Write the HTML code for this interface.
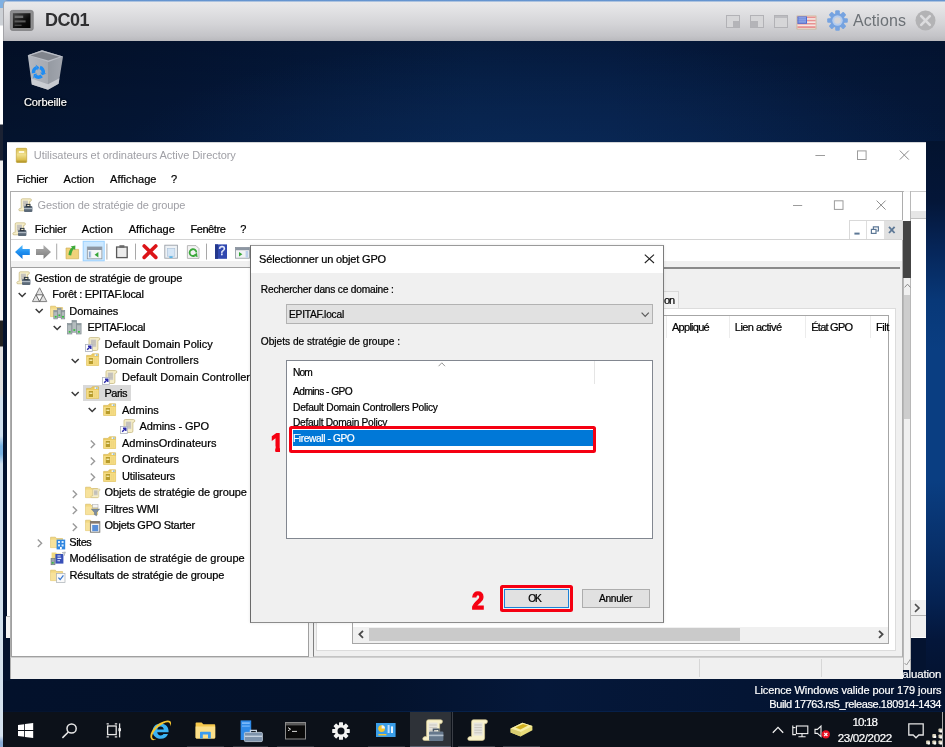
<!DOCTYPE html>
<html lang="fr"><head><meta charset="utf-8"><title>DC01</title>
<style>
html,body{margin:0;padding:0;background:#041630;}
body{width:945px;height:747px;overflow:hidden;position:relative;font-family:'Liberation Sans',sans-serif;}
#s{position:absolute;left:-4px;top:-4px;width:953px;height:755px;overflow:hidden;filter:blur(0.4px);}
#w{position:absolute;left:4px;top:4px;width:945px;height:747px;}
#s div,#s span,#s svg{position:absolute;box-sizing:border-box;}
#s span{white-space:pre;}
#s svg{overflow:visible;}
</style></head><body><div id="s"><div id="w">
<div style="left:-4px;top:-4px;width:953px;height:755px;background:#04152f;"></div>
<div style="left:0px;top:0px;width:945px;height:747px;background:#04152f;background:radial-gradient(ellipse 420px 120px at 540px 160px,rgba(12,46,94,0.55) 0%,rgba(12,46,94,0) 100%),linear-gradient(180deg,rgba(0,0,10,0.22) 41px,rgba(0,0,10,0) 141px),linear-gradient(90deg,#04132d 0%,#041738 20%,#06214a 50%,#06204a 65%,#051b40 85%,#04183a 100%);"></div>
<div style="left:925px;top:141px;width:24px;height:570px;background:#08326c;background:linear-gradient(180deg,#03132f 0px,#041638 60px,#06265a 110px,#083878 160px,#0a3e82 210px,#0a3e82 340px,#08316c 400px,#052252 460px,#04163a 500px,#041330 540px,#041330 570px);"></div>
<div style="left:3px;top:678px;width:923px;height:33px;background:#04142f;background:linear-gradient(90deg,#03112b 0%,#03122c 40%,#05183a 58%,#041534 80%,#041330 100%);"></div>
<div style="left:902px;top:637px;width:24px;height:42px;background:#041330;"></div>
<div style="left:3px;top:141px;width:8px;height:540px;background:#04132e;"></div>
<div style="left:-4px;top:0px;width:7px;height:751px;background:#e4e8ec;background:linear-gradient(180deg,#7aa8dc 0px,#85b2e2 6px,#cdd1d6 7px,#cdd1d6 25px,#fff 26px,#fff 124px,#1b2233 125px,#1b2233 160px,#f0f0f0 161px,#f6f6f6 320px,#222 321px,#222 346px,#e2e2e2 347px,#e0e0e0 394px,#d2e2f0 398px,#d2e2f0 436px,#78b2e2 446px,#78b2e2 454px,#d2e2f0 464px,#d6e3ee 736px,#88aad4 742px,#88aad4 747px);"></div>
<div style="left:-4px;top:-4px;width:953px;height:5px;background:#6a98d2;"></div>
<div style="left:0px;top:0px;width:12px;height:8px;background:#7fb0e2;"></div>
<div style="left:3px;top:0px;width:942px;height:41.2px;background:#d4d4d7;background:linear-gradient(180deg,#5e8fcc 0px,#6f9cd4 1.2px,#e9e9eb 1.8px,#e4e4e6 8px,#d4d4d7 24px,#c4c4c8 36px,#b8b8bc 41.2px);border-top-left-radius:5px;border-left:0.6px solid #a4a4a8;"></div>
<svg style="left:10.3px;top:10px" width="24" height="21" viewBox="0 0 24 21"><defs><linearGradient id="cg" x1="0" y1="0" x2="1" y2="1"><stop offset="0" stop-color="#4a4a4a"/><stop offset="0.6" stop-color="#0c0c0c"/><stop offset="1" stop-color="#000"/></linearGradient></defs><rect x="0.4" y="0.4" width="22.8" height="20" rx="2" fill="#8e8e90" stroke="#7a7a7c" stroke-width="0.8"/><rect x="2.9" y="3.2" width="17.6" height="14.8" fill="url(#cg)"/><rect x="4.6" y="5.6" width="8.6" height="2.4" fill="#6c6c6c"/><rect x="4.6" y="10.4" width="11" height="2" fill="#5a5a5a"/><rect x="4.6" y="14.6" width="7" height="1.4" fill="#444"/></svg>
<span style="left:45.00px;top:10.11px;font-size:18px;line-height:20.106px;color:#2f2f31;font-weight:700;letter-spacing:-0.508px;">DC01</span>
<div style="left:725.5px;top:14.5px;width:14.5px;height:13px;background:#d6d6d8;border:1px solid #b2b2b6;"></div>
<div style="left:749.5px;top:14.5px;width:14.5px;height:13px;background:#d6d6d8;border:1px solid #b2b2b6;"></div>
<div style="left:773.5px;top:14.5px;width:14.5px;height:13px;background:#d6d6d8;border:1px solid #b2b2b6;"></div>
<div style="left:732.5px;top:21px;width:6.5px;height:5.5px;background:#b4b4b8;"></div>
<div style="left:750.5px;top:20.5px;width:7px;height:6px;background:#b4b4b8;"></div>
<div style="left:774.5px;top:15.5px;width:12.5px;height:2.5px;background:#bcbcc0;"></div>
<svg style="left:797px;top:15.5px" width="19" height="13" viewBox="0 0 19 13"><rect width="19" height="13" fill="#f4e6e2" stroke="#c9ac86" stroke-width="0.7"/><g fill="#e89292"><rect x="0.4" y="0.6" width="18.2" height="1.5"/><rect x="0.4" y="3.8" width="18.2" height="1.5"/><rect x="0.4" y="7" width="18.2" height="1.5"/><rect x="0.4" y="10.2" width="18.2" height="1.8"/></g><rect x="0.4" y="0.4" width="9.6" height="7.4" fill="#4a6cd2"/><g fill="#c4d0f4"><rect x="1.4" y="1.5" width="7.6" height="0.9"/><rect x="1.4" y="3.5" width="7.6" height="0.9"/><rect x="1.4" y="5.5" width="7.6" height="0.9"/></g></svg>
<svg style="left:826.5px;top:10px" width="21" height="21" viewBox="-10.5 -10.5 21 21"><g fill="#76a3e0"><rect x="-2.3" y="-10.3" width="4.6" height="5" rx="1" transform="rotate(0)"/><rect x="-2.3" y="-10.3" width="4.6" height="5" rx="1" transform="rotate(45)"/><rect x="-2.3" y="-10.3" width="4.6" height="5" rx="1" transform="rotate(90)"/><rect x="-2.3" y="-10.3" width="4.6" height="5" rx="1" transform="rotate(135)"/><rect x="-2.3" y="-10.3" width="4.6" height="5" rx="1" transform="rotate(180)"/><rect x="-2.3" y="-10.3" width="4.6" height="5" rx="1" transform="rotate(225)"/><rect x="-2.3" y="-10.3" width="4.6" height="5" rx="1" transform="rotate(270)"/><rect x="-2.3" y="-10.3" width="4.6" height="5" rx="1" transform="rotate(315)"/></g><circle r="7.3" fill="#76a3e0"/><circle r="5.2" fill="#b4ccee"/><circle r="3.3" fill="#d5d5d8"/></svg>
<span style="left:853.00px;top:11.92px;font-size:16px;line-height:17.872px;color:#6c7176;letter-spacing:0.076px;">Actions</span>
<svg style="left:915px;top:9.5px" width="21" height="21" viewBox="0 0 21 21"><circle cx="10.5" cy="10.5" r="10" fill="#b3b3b5"/><path d="M6.2 6.2 L14.8 14.8 M14.8 6.2 L6.2 14.8" stroke="#dcdcde" stroke-width="2.6" stroke-linecap="round"/></svg>
<svg style="left:27px;top:49px" width="37" height="42" viewBox="0 0 37 42">
<defs><linearGradient id="rb1" x1="0" y1="0" x2="1" y2="0"><stop offset="0" stop-color="#b4b8c0"/><stop offset="0.56" stop-color="#a6aab2"/><stop offset="0.57" stop-color="#959aa2"/><stop offset="1" stop-color="#a2a6ae"/></linearGradient></defs>
<path d="M0.8 6.3 L15 1.3 L36 7.6 L31.6 34.8 L21 40.8 L4.8 35.6 Z" fill="url(#rb1)"/>
<path d="M0.8 6.3 L15 1.3 L36 7.6 L21.5 13 Z" fill="#b9bdc5"/>
<path d="M3.4 6.6 L15 2.8 L32.8 7.8 L21.4 11.6 Z" fill="#80848c"/>
<path d="M4.2 29.6 L21 35.2 L32.4 29.2 L31.6 34.8 L21 40.8 L4.8 35.6 Z" fill="#d2d5da" opacity="0.8"/>
<path d="M12.91 18.54 A4.9 4.9 0 0 1 16.23 24.05" fill="none" stroke="#1f8cf2" stroke-width="3.6"/><path d="M19.38 24.61 L15.23 26.26 L13.07 23.50 Z" fill="#1f8cf2"/><path d="M14.68 26.84 A4.9 4.9 0 0 1 8.25 26.95" fill="none" stroke="#1f8cf2" stroke-width="3.6"/><path d="M6.19 29.40 L6.84 24.98 L10.31 24.50 Z" fill="#1f8cf2"/><path d="M6.61 24.22 A4.9 4.9 0 0 1 9.72 18.60" fill="none" stroke="#1f8cf2" stroke-width="3.6"/><path d="M8.63 15.59 L12.14 18.36 L10.82 21.60 Z" fill="#1f8cf2"/>
</svg>
<span style="left:23.90px;top:95.84px;font-size:11px;line-height:12.287px;color:#fff;letter-spacing:-0.069px;-webkit-text-stroke:0.2px #fff;text-shadow:0 1px 2px #000,0 0 2px #000;">Corbeille</span>
<span style="left:902.34px;top:667.59px;font-size:11.5px;line-height:12.845px;color:#fff;letter-spacing:-0.162px;-webkit-text-stroke:0.2px #fff;">aluation</span>
<span style="left:754.40px;top:683.75px;font-size:11px;line-height:12.287px;color:#fff;letter-spacing:-0.102px;-webkit-text-stroke:0.2px #fff;">Licence Windows valide pour 179 jours</span>
<span style="left:769.28px;top:698.04px;font-size:11px;line-height:12.287px;color:#fff;letter-spacing:-0.421px;-webkit-text-stroke:0.2px #fff;">Build 17763.rs5_release.180914-1434</span>
<div style="left:6.9px;top:141.6px;width:918.8px;height:496.4px;background:#fff;border-top:1px solid #d4d6d8;"></div>
<svg style="left:16px;top:148px" width="11" height="15" viewBox="0 0 11 15"><defs><linearGradient id="ad" x1="0" y1="0" x2="0" y2="1"><stop offset="0" stop-color="#d9bd4c"/><stop offset="0.45" stop-color="#f0df8c"/><stop offset="0.8" stop-color="#dcc050"/><stop offset="1" stop-color="#a88a1c"/></linearGradient></defs><rect x="0.3" y="0.3" width="10.4" height="14.2" rx="0.8" fill="url(#ad)" stroke="#b89a28" stroke-width="0.6"/><rect x="2.8" y="3" width="5.4" height="2" fill="#fdf8dc"/></svg>
<span style="left:33.80px;top:149.44px;font-size:11px;line-height:12.287px;color:#a0a0a6;letter-spacing:-0.050px;">Utilisateurs et ordinateurs Active Directory</span>
<svg style="left:810px;top:146px" width="105" height="18" viewBox="0 0 105 18"><g stroke="#9c9c9c" stroke-width="1" fill="none"><path d="M5.4 9.5 H15"/><rect x="47.5" y="4.9" width="8.6" height="8.6"/><path d="M89.8 4.6 L98.8 13.6 M98.8 4.6 L89.8 13.6" stroke="#8c8c8c"/></g></svg>
<span style="left:16.50px;top:173.34px;font-size:11px;line-height:12.287px;color:#000;letter-spacing:-0.259px;-webkit-text-stroke:0.22px #000;">Fichier</span>
<span style="left:63.50px;top:173.34px;font-size:11px;line-height:12.287px;color:#000;letter-spacing:0.070px;-webkit-text-stroke:0.22px #000;">Action</span>
<span style="left:110.00px;top:173.34px;font-size:11px;line-height:12.287px;color:#000;letter-spacing:0.103px;-webkit-text-stroke:0.22px #000;">Affichage</span>
<span style="left:171.00px;top:173.34px;font-size:11px;line-height:12.287px;color:#000;-webkit-text-stroke:0.22px #000;">?</span>
<div style="left:911px;top:191px;width:14.7px;height:1px;background:#c8c8c8;"></div>
<div style="left:911px;top:211px;width:14.7px;height:6.5px;background:#e6e6e6;"></div>
<div style="left:911px;top:217.5px;width:14.7px;height:1px;background:#c0c0c0;"></div>
<div style="left:911px;top:600.4px;width:14.7px;height:14.6px;background:#f0f0f0;"></div>
<svg style="left:913px;top:602.5px" width="9" height="10" viewBox="0 0 9 10"><path d="M2 1.2 L6 5 L2 8.8" fill="none" stroke="#505050" stroke-width="1.6"/></svg>
<div style="left:911px;top:615px;width:14.7px;height:1.2px;background:#b4b4b4;"></div>
<div style="left:911px;top:616.2px;width:14.7px;height:21.3px;background:#f0f0f0;"></div>
<div style="left:6.4px;top:615.7px;width:4px;height:1px;background:#bcbcbc;"></div>
<div style="left:6.4px;top:616.7px;width:4px;height:21px;background:#f4f4f4;"></div>
<div style="left:10px;top:190.5px;width:893px;height:488.2px;background:#fff;border:1px solid #adadad;border-bottom:none;"></div>
<div style="left:902.6px;top:191px;width:8.6px;height:479px;background:#f0f0f0;border-left:1px solid #b8b8b8;border-right:1px solid #b8b8b8;"></div>
<div style="left:903.4px;top:191.5px;width:7px;height:29px;background:#fff;"></div>
<div style="left:902.6px;top:220.5px;width:8.4px;height:57px;background:#444;"></div>
<svg style="left:903.5px;top:282px" width="7" height="8" viewBox="0 0 7 8"><path d="M0.6 5.4 L3.5 2.2 L6.4 5.4" fill="none" stroke="#8a8a8a" stroke-width="1"/></svg>
<div style="left:903.6px;top:295px;width:6.8px;height:124px;background:#cdcdcd;"></div>
<svg style="left:903.5px;top:658px" width="7" height="8" viewBox="0 0 7 8"><path d="M0.5 5 L2.5 7 L6.5 1" fill="none" stroke="#9a9a9a" stroke-width="1"/></svg>
<svg style="left:17.6px;top:198.2px" width="15" height="15" viewBox="0 0 15 15"><path d="M3.2 2 Q3.2 0.8 4.4 0.8 H12.2 Q13.6 0.8 13.4 2.2 Q13.2 3.4 12 3.4 H11.6 V11.4 Q11.6 12.8 10.2 12.8 H2 Q0.6 12.8 0.8 11.6 Q1 10.4 2.4 10.4 H3.2 Z" fill="#f6eec8" stroke="#c4b67e" stroke-width="0.7"/><rect x="4.8" y="2.6" width="5.2" height="7" fill="#cfccc6"/><path d="M5.2 4 H9.6 M5.2 5.8 H9.6 M5.2 7.6 H9.6" stroke="#b4b1aa" stroke-width="0.7"/><rect x="6" y="8" width="8.4" height="6" rx="1" fill="#5c6a78"/><rect x="8.4" y="6.4" width="3.6" height="2.2" fill="none" stroke="#2d3640" stroke-width="1"/><rect x="6" y="10" width="8.4" height="1.2" fill="#aeb8c2"/></svg>
<span style="left:37.60px;top:199.34px;font-size:11px;line-height:12.287px;color:#a0a0a6;letter-spacing:-0.112px;">Gestion de stratégie de groupe</span>
<svg style="left:788px;top:196px" width="105" height="18" viewBox="0 0 105 18"><g stroke="#9c9c9c" stroke-width="1" fill="none"><path d="M5 9.5 H14.2"/><rect x="46.4" y="4.8" width="8.6" height="8.6"/><path d="M88.6 4.6 L97.6 13.6 M97.6 4.6 L88.6 13.6" stroke="#8c8c8c"/></g></svg>
<svg style="left:12.4px;top:222.4px" width="15" height="15" viewBox="0 0 15 15"><path d="M3.2 2 Q3.2 0.8 4.4 0.8 H12.2 Q13.6 0.8 13.4 2.2 Q13.2 3.4 12 3.4 H11.6 V11.4 Q11.6 12.8 10.2 12.8 H2 Q0.6 12.8 0.8 11.6 Q1 10.4 2.4 10.4 H3.2 Z" fill="#f6eec8" stroke="#c4b67e" stroke-width="0.7"/><rect x="4.8" y="2.6" width="5.2" height="7" fill="#cfccc6"/><path d="M5.2 4 H9.6 M5.2 5.8 H9.6 M5.2 7.6 H9.6" stroke="#b4b1aa" stroke-width="0.7"/><rect x="6" y="8" width="8.4" height="6" rx="1" fill="#5c6a78"/><rect x="8.4" y="6.4" width="3.6" height="2.2" fill="none" stroke="#2d3640" stroke-width="1"/><rect x="6" y="10" width="8.4" height="1.2" fill="#aeb8c2"/></svg>
<span style="left:34.80px;top:223.34px;font-size:11px;line-height:12.287px;color:#000;letter-spacing:-0.188px;-webkit-text-stroke:0.22px #000;">Fichier</span>
<span style="left:81.70px;top:223.34px;font-size:11px;line-height:12.287px;color:#000;letter-spacing:0.120px;-webkit-text-stroke:0.22px #000;">Action</span>
<span style="left:128.70px;top:223.34px;font-size:11px;line-height:12.287px;color:#000;letter-spacing:0.070px;-webkit-text-stroke:0.22px #000;">Affichage</span>
<span style="left:190.40px;top:223.34px;font-size:11px;line-height:12.287px;color:#000;letter-spacing:-0.417px;-webkit-text-stroke:0.22px #000;">Fenêtre</span>
<span style="left:240.20px;top:223.34px;font-size:11px;line-height:12.287px;color:#000;-webkit-text-stroke:0.22px #000;">?</span>
<div style="left:849px;top:220px;width:53.6px;height:19.6px;background:#fff;border:1px solid #d9d9d9;"></div>
<div style="left:866.3px;top:220.5px;width:1px;height:18.6px;background:#dedede;"></div>
<div style="left:884px;top:220.5px;width:18px;height:18.6px;background:#e1e1e1;"></div>
<svg style="left:849px;top:220px" width="54" height="20" viewBox="0 0 54 20"><g fill="none" stroke="#5d7896" stroke-width="1.2"><path d="M5.4 13.6 H10.6" stroke-width="2"/><rect x="22.4" y="9.4" width="4.6" height="4"/><path d="M24.4 9 V6.8 H29.4 V11 H27.4"/><path d="M40 6.8 L45.6 13 M45.6 6.8 L40 13" stroke-width="1.8"/></g></svg>
<div style="left:11px;top:239.3px;width:891px;height:1px;background:#d4d4d4;"></div>
<div style="left:11px;top:260.8px;width:891px;height:6.4px;background:#f0f0f0;"></div>
<svg style="left:0;top:0" width="260" height="270" viewBox="0 0 260 270">
<defs><linearGradient id="ba" x1="0" y1="0" x2="0" y2="1"><stop offset="0" stop-color="#5cc0ff"/><stop offset="0.5" stop-color="#1e8ff0"/><stop offset="1" stop-color="#1070d8"/></linearGradient>
<linearGradient id="ga" x1="0" y1="0" x2="0" y2="1"><stop offset="0" stop-color="#b0b0b0"/><stop offset="1" stop-color="#7c7c7c"/></linearGradient></defs>
<path d="M15 252 L22.5 245 V249 H29.8 V255 H22.5 V259 Z" fill="url(#ba)"/>
<path d="M51 252 L43.5 245 V249 H36 V255 H43.5 V259 Z" fill="url(#ga)"/>
<rect x="56.2" y="243.6" width="1" height="16" fill="#a8a8a8"/>
<path d="M66 248 H70.5 L71.5 249.4 H78.6 V258.8 H66 Z" fill="#f0d27a" stroke="#c9a94e" stroke-width="0.6"/>
<path d="M68.5 255 C69 250.5 70.6 248.6 72 247.6 L70.6 246.4 L75.4 245.4 L75.2 250 L73.8 248.9 C72.6 250 71.6 252 71.2 255.4 Z" fill="#3faa3a"/>
<rect x="83.2" y="241.3" width="21" height="19.5" fill="#cce8ff" stroke="#99d1ff" stroke-width="1"/>
<rect x="87.3" y="247" width="14.6" height="11.8" fill="#f4f6f8" stroke="#8c949c" stroke-width="0.8"/>
<rect x="87.3" y="247" width="14.6" height="3" fill="#8c96a2"/>
<rect x="88.4" y="250.8" width="3" height="7.4" fill="#d7e4f2"/><rect x="89.3" y="251.6" width="1.1" height="5.6" fill="#6f93c4"/>
<path d="M98.4 252 V257.4 L94.6 254.7 Z" fill="#35a638"/>
<rect x="106.4" y="243.6" width="1" height="16" fill="#a8a8a8"/>
<rect x="116.6" y="247" width="10.6" height="10.6" fill="#ececec" stroke="#595959" stroke-width="1.3"/>
<rect x="119.4" y="245.2" width="5" height="2.6" fill="#6a6a6a"/>
<rect x="135" y="243.6" width="1" height="16" fill="#a8a8a8"/>
<path d="M144.2 246 L155.8 257.4 M155.8 246 L144.2 257.4" stroke="#dc1418" stroke-width="3.6" stroke-linecap="round"/>
<rect x="164.8" y="245.2" width="12.6" height="13" fill="#eef2f6" stroke="#9aa0a8" stroke-width="0.9"/>
<rect x="167.4" y="248.4" width="7.4" height="7.8" fill="#d5e6f6" stroke="#a9bfd6" stroke-width="0.6"/><rect x="169.4" y="256.2" width="3.2" height="1.8" fill="#58b4e8"/>
<path d="M187.4 245.6 H196 L199 248.6 V258.4 H187.4 Z" fill="#f2f2f2" stroke="#a8a8a8" stroke-width="0.8"/>
<path d="M196.4 252.6 A3.4 3.4 0 1 0 194.6 255.6" fill="none" stroke="#3aa83a" stroke-width="1.8"/><path d="M193 255.2 L197.6 257.2 L197 252.8 Z" fill="#3aa83a"/>
<rect x="206" y="243.6" width="1" height="16" fill="#a8a8a8"/>
<rect x="215" y="244.4" width="12" height="14.4" fill="#3048b0"/><rect x="215" y="244.4" width="3" height="14.4" fill="#24388c"/>
<rect x="235.4" y="247.4" width="14" height="10.8" fill="#f0f2f4" stroke="#8c949c" stroke-width="0.8"/><rect x="235.4" y="247.4" width="14" height="2.8" fill="#8c96a2"/><path d="M239 252 V256.6 L242.4 254.3 Z" fill="#35a638"/><rect x="245.6" y="251" width="2.6" height="6.6" fill="#bcd0ea"/>
</svg>
<span style="left:218.40px;top:245.09px;font-size:12.5px;line-height:13.963px;color:#eef2ff;-webkit-text-stroke:0.3px #eef2ff;">?</span>
<div style="left:10.5px;top:267px;width:298.7px;height:390px;background:#fff;border:1px solid #a0a0a0;"></div>
<div style="left:309.2px;top:267px;width:4px;height:390px;background:#f0f0f0;"></div>
<div style="left:83px;top:385.4px;width:48px;height:16px;background:#d9d9d9;"></div>
<svg style="left:15.5px;top:270.9px" width="15" height="15" viewBox="0 0 15 15"><path d="M3.2 2 Q3.2 0.8 4.4 0.8 H12.2 Q13.6 0.8 13.4 2.2 Q13.2 3.4 12 3.4 H11.6 V11.4 Q11.6 12.8 10.2 12.8 H2 Q0.6 12.8 0.8 11.6 Q1 10.4 2.4 10.4 H3.2 Z" fill="#f6eec8" stroke="#c4b67e" stroke-width="0.7"/><rect x="4.8" y="2.6" width="5.2" height="7" fill="#cfccc6"/><path d="M5.2 4 H9.6 M5.2 5.8 H9.6 M5.2 7.6 H9.6" stroke="#b4b1aa" stroke-width="0.7"/><rect x="6" y="8" width="8.4" height="6" rx="1" fill="#5c6a78"/><rect x="8.4" y="6.4" width="3.6" height="2.2" fill="none" stroke="#2d3640" stroke-width="1"/><rect x="6" y="10" width="8.4" height="1.2" fill="#aeb8c2"/></svg>
<span style="left:34.40px;top:271.55px;font-size:11px;line-height:12.287px;color:#000;letter-spacing:-0.102px;-webkit-text-stroke:0.22px #000;">Gestion de stratégie de groupe</span>
<svg style="left:18px;top:291.8px" width="9" height="6" viewBox="0 0 9 6"><path d="M0.7 0.9 L4.2 4.5 L7.7 0.9" fill="none" stroke="#3a3a3a" stroke-width="1.5"/></svg>
<svg style="left:32.4px;top:286.59999999999997px" width="16" height="16" viewBox="0 0 16 16"><path d="M7.6 0.8 L14.8 14.6 H0.4 Z" fill="#e2e2e2" stroke="#808080" stroke-width="1"/><path d="M4 7.8 H11.2 L7.6 14.6 Z" fill="#fcfcfc" stroke="#5a5a5a" stroke-width="0.9"/></svg>
<span style="left:52.30px;top:288.05px;font-size:11px;line-height:12.287px;color:#000;letter-spacing:-0.285px;-webkit-text-stroke:0.22px #000;">Forêt : EPITAF.local</span>
<svg style="left:34.9px;top:308.3px" width="9" height="6" viewBox="0 0 9 6"><path d="M0.7 0.9 L4.2 4.5 L7.7 0.9" fill="none" stroke="#3a3a3a" stroke-width="1.5"/></svg>
<svg style="left:50px;top:303.9px" width="16" height="15" viewBox="0 0 16 15"><path d="M0.6 2.2 H5.4 L6.6 3.6 H12.6 V12.6 H0.6 Z" fill="#f3d983" stroke="#d2b55a" stroke-width="0.6"/><path d="M0.6 4.6 H12.6 V12.6 H0.6 Z" fill="#f7e29c"/><rect x="3.8" y="6.6" width="3.6" height="8.32" fill="#b4bcbe" stroke="#78848a" stroke-width="0.6"/><rect x="3.8" y="6.6" width="3.6" height="1.6" fill="#8e9a9e"/><rect x="4.7" y="11.92" width="1.9" height="1.7" fill="#34c03c"/><rect x="11.16" y="6.6" width="3.6" height="8.32" fill="#b4bcbe" stroke="#78848a" stroke-width="0.6"/><rect x="11.16" y="6.6" width="3.6" height="1.6" fill="#8e9a9e"/><rect x="12.06" y="11.92" width="1.9" height="1.7" fill="#34c03c"/><rect x="7.48" y="4.2" width="3.6" height="9.28" fill="#b4bcbe" stroke="#78848a" stroke-width="0.6"/><rect x="7.48" y="4.2" width="3.6" height="1.6" fill="#8e9a9e"/><rect x="8.38" y="10.48" width="1.9" height="1.7" fill="#34c03c"/></svg>
<span style="left:69.30px;top:304.55px;font-size:11px;line-height:12.287px;color:#000;letter-spacing:-0.066px;-webkit-text-stroke:0.22px #000;">Domaines</span>
<svg style="left:53px;top:324.8px" width="9" height="6" viewBox="0 0 9 6"><path d="M0.7 0.9 L4.2 4.5 L7.7 0.9" fill="none" stroke="#3a3a3a" stroke-width="1.5"/></svg>
<svg style="left:67.4px;top:320.4px" width="15" height="15" viewBox="0 0 15 15"><rect x="0.4" y="3.6" width="4.5" height="10.4" fill="#b4bcbe" stroke="#78848a" stroke-width="0.6"/><rect x="0.4" y="3.6" width="4.5" height="1.6" fill="#8e9a9e"/><rect x="1.75" y="11.0" width="1.9" height="1.7" fill="#34c03c"/><rect x="9.6" y="3.6" width="4.5" height="10.4" fill="#b4bcbe" stroke="#78848a" stroke-width="0.6"/><rect x="9.6" y="3.6" width="4.5" height="1.6" fill="#8e9a9e"/><rect x="10.95" y="11.0" width="1.9" height="1.7" fill="#34c03c"/><rect x="5.0" y="0.6" width="4.5" height="11.6" fill="#b4bcbe" stroke="#78848a" stroke-width="0.6"/><rect x="5.0" y="0.6" width="4.5" height="1.6" fill="#8e9a9e"/><rect x="6.35" y="9.2" width="1.9" height="1.7" fill="#34c03c"/></svg>
<span style="left:87.50px;top:321.05px;font-size:11px;line-height:12.287px;color:#000;letter-spacing:-0.388px;-webkit-text-stroke:0.22px #000;">EPITAF.local</span>
<svg style="left:84.6px;top:336.9px" width="15" height="15" viewBox="0 0 15 15"><g transform="translate(0.6,-0.3) scale(1.06,1.08)"><path d="M3.2 2 Q3.2 0.8 4.4 0.8 H12.2 Q13.6 0.8 13.4 2.2 Q13.2 3.4 12 3.4 H11.6 V11.4 Q11.6 12.8 10.2 12.8 H2 Q0.6 12.8 0.8 11.6 Q1 10.4 2.4 10.4 H3.2 Z" fill="#f6eec8" stroke="#c4b67e" stroke-width="0.7"/><rect x="4.8" y="2.6" width="5.2" height="7" fill="#cfccc6"/><path d="M5.2 4 H9.6 M5.2 5.8 H9.6 M5.2 7.6 H9.6" stroke="#b4b1aa" stroke-width="0.7"/></g><rect x="0.5" y="7.4" width="6.8" height="7" fill="#fcfcff" stroke="#aab0bc" stroke-width="0.8"/><path d="M2.2 12.8 L5.4 9.6 M3 9.2 H5.8 V12" stroke="#2a2aa8" stroke-width="1.4" fill="none"/></svg>
<span style="left:104.50px;top:337.55px;font-size:11px;line-height:12.287px;color:#000;-webkit-text-stroke:0.22px #000;">Default Domain Policy</span>
<svg style="left:70.6px;top:357.8px" width="9" height="6" viewBox="0 0 9 6"><path d="M0.7 0.9 L4.2 4.5 L7.7 0.9" fill="none" stroke="#3a3a3a" stroke-width="1.5"/></svg>
<svg style="left:85.8px;top:353.4px" width="14" height="13" viewBox="0 0 14 13"><path d="M0.6 2.4 H5 L6.4 0.8 H12.6 V12.4 H0.6 Z" fill="#eccb62" stroke="#d0ac44" stroke-width="0.6"/><path d="M0.6 4 H12.6 V12.4 H0.6 Z" fill="#f5dc84"/><rect x="8.6" y="1.2" width="3" height="1.8" fill="#eef4fa"/><rect x="10.2" y="1.4" width="1.2" height="1.4" fill="#6aa8c8"/><rect x="2.8" y="5" width="4.2" height="6" fill="#b89c2c"/><rect x="3.4" y="6.6" width="3" height="1.4" fill="#f4e8a8"/><path d="M8.6 5 V11.6 M10.4 5 V11.6" stroke="#ecd27a" stroke-width="0.6"/></svg>
<span style="left:104.50px;top:354.05px;font-size:11px;line-height:12.287px;color:#000;-webkit-text-stroke:0.22px #000;">Domain Controllers</span>
<svg style="left:102.2px;top:369.9px" width="15" height="15" viewBox="0 0 15 15"><g transform="translate(0.6,-0.3) scale(1.06,1.08)"><path d="M3.2 2 Q3.2 0.8 4.4 0.8 H12.2 Q13.6 0.8 13.4 2.2 Q13.2 3.4 12 3.4 H11.6 V11.4 Q11.6 12.8 10.2 12.8 H2 Q0.6 12.8 0.8 11.6 Q1 10.4 2.4 10.4 H3.2 Z" fill="#f6eec8" stroke="#c4b67e" stroke-width="0.7"/><rect x="4.8" y="2.6" width="5.2" height="7" fill="#cfccc6"/><path d="M5.2 4 H9.6 M5.2 5.8 H9.6 M5.2 7.6 H9.6" stroke="#b4b1aa" stroke-width="0.7"/></g><rect x="0.5" y="7.4" width="6.8" height="7" fill="#fcfcff" stroke="#aab0bc" stroke-width="0.8"/><path d="M2.2 12.8 L5.4 9.6 M3 9.2 H5.8 V12" stroke="#2a2aa8" stroke-width="1.4" fill="none"/></svg>
<span style="left:121.90px;top:370.55px;font-size:11px;line-height:12.287px;color:#000;letter-spacing:0.065px;-webkit-text-stroke:0.22px #000;">Default Domain Controller</span>
<svg style="left:70.6px;top:390.8px" width="9" height="6" viewBox="0 0 9 6"><path d="M0.7 0.9 L4.2 4.5 L7.7 0.9" fill="none" stroke="#3a3a3a" stroke-width="1.5"/></svg>
<svg style="left:85.8px;top:386.4px" width="14" height="13" viewBox="0 0 14 13"><path d="M0.6 2.4 H5 L6.4 0.8 H12.6 V12.4 H0.6 Z" fill="#eccb62" stroke="#d0ac44" stroke-width="0.6"/><path d="M0.6 4 H12.6 V12.4 H0.6 Z" fill="#f5dc84"/><rect x="8.6" y="1.2" width="3" height="1.8" fill="#eef4fa"/><rect x="10.2" y="1.4" width="1.2" height="1.4" fill="#6aa8c8"/><rect x="2.8" y="5" width="4.2" height="6" fill="#b89c2c"/><rect x="3.4" y="6.6" width="3" height="1.4" fill="#f4e8a8"/><path d="M8.6 5 V11.6 M10.4 5 V11.6" stroke="#ecd27a" stroke-width="0.6"/></svg>
<span style="left:104.50px;top:387.05px;font-size:11px;line-height:12.287px;color:#000;letter-spacing:-0.512px;-webkit-text-stroke:0.22px #000;">Paris</span>
<svg style="left:88px;top:407.3px" width="9" height="6" viewBox="0 0 9 6"><path d="M0.7 0.9 L4.2 4.5 L7.7 0.9" fill="none" stroke="#3a3a3a" stroke-width="1.5"/></svg>
<svg style="left:103.2px;top:402.9px" width="14" height="13" viewBox="0 0 14 13"><path d="M0.6 2.4 H5 L6.4 0.8 H12.6 V12.4 H0.6 Z" fill="#eccb62" stroke="#d0ac44" stroke-width="0.6"/><path d="M0.6 4 H12.6 V12.4 H0.6 Z" fill="#f5dc84"/><rect x="8.6" y="1.2" width="3" height="1.8" fill="#eef4fa"/><rect x="10.2" y="1.4" width="1.2" height="1.4" fill="#6aa8c8"/><rect x="2.8" y="5" width="4.2" height="6" fill="#b89c2c"/><rect x="3.4" y="6.6" width="3" height="1.4" fill="#f4e8a8"/><path d="M8.6 5 V11.6 M10.4 5 V11.6" stroke="#ecd27a" stroke-width="0.6"/></svg>
<span style="left:121.90px;top:403.55px;font-size:11px;line-height:12.287px;color:#000;letter-spacing:0.052px;-webkit-text-stroke:0.22px #000;">Admins</span>
<svg style="left:119.7px;top:419.4px" width="15" height="15" viewBox="0 0 15 15"><g transform="translate(0.6,-0.3) scale(1.06,1.08)"><path d="M3.2 2 Q3.2 0.8 4.4 0.8 H12.2 Q13.6 0.8 13.4 2.2 Q13.2 3.4 12 3.4 H11.6 V11.4 Q11.6 12.8 10.2 12.8 H2 Q0.6 12.8 0.8 11.6 Q1 10.4 2.4 10.4 H3.2 Z" fill="#f6eec8" stroke="#c4b67e" stroke-width="0.7"/><rect x="4.8" y="2.6" width="5.2" height="7" fill="#cfccc6"/><path d="M5.2 4 H9.6 M5.2 5.8 H9.6 M5.2 7.6 H9.6" stroke="#b4b1aa" stroke-width="0.7"/></g><rect x="0.5" y="7.4" width="6.8" height="7" fill="#fcfcff" stroke="#aab0bc" stroke-width="0.8"/><path d="M2.2 12.8 L5.4 9.6 M3 9.2 H5.8 V12" stroke="#2a2aa8" stroke-width="1.4" fill="none"/></svg>
<span style="left:139.50px;top:420.05px;font-size:11px;line-height:12.287px;color:#000;letter-spacing:-0.117px;-webkit-text-stroke:0.22px #000;">Admins - GPO</span>
<svg style="left:90.2px;top:440.3px" width="6" height="9" viewBox="0 0 6 9"><path d="M0.8 0.6 L4.6 4.3 L0.8 8" fill="none" stroke="#9a9a9a" stroke-width="1.4"/></svg>
<svg style="left:103.2px;top:435.9px" width="14" height="13" viewBox="0 0 14 13"><path d="M0.6 2.4 H5 L6.4 0.8 H12.6 V12.4 H0.6 Z" fill="#eccb62" stroke="#d0ac44" stroke-width="0.6"/><path d="M0.6 4 H12.6 V12.4 H0.6 Z" fill="#f5dc84"/><rect x="8.6" y="1.2" width="3" height="1.8" fill="#eef4fa"/><rect x="10.2" y="1.4" width="1.2" height="1.4" fill="#6aa8c8"/><rect x="2.8" y="5" width="4.2" height="6" fill="#b89c2c"/><rect x="3.4" y="6.6" width="3" height="1.4" fill="#f4e8a8"/><path d="M8.6 5 V11.6 M10.4 5 V11.6" stroke="#ecd27a" stroke-width="0.6"/></svg>
<span style="left:121.90px;top:436.55px;font-size:11px;line-height:12.287px;color:#000;letter-spacing:0.026px;-webkit-text-stroke:0.22px #000;">AdminsOrdinateurs</span>
<svg style="left:90.2px;top:456.8px" width="6" height="9" viewBox="0 0 6 9"><path d="M0.8 0.6 L4.6 4.3 L0.8 8" fill="none" stroke="#9a9a9a" stroke-width="1.4"/></svg>
<svg style="left:103.2px;top:452.4px" width="14" height="13" viewBox="0 0 14 13"><path d="M0.6 2.4 H5 L6.4 0.8 H12.6 V12.4 H0.6 Z" fill="#eccb62" stroke="#d0ac44" stroke-width="0.6"/><path d="M0.6 4 H12.6 V12.4 H0.6 Z" fill="#f5dc84"/><rect x="8.6" y="1.2" width="3" height="1.8" fill="#eef4fa"/><rect x="10.2" y="1.4" width="1.2" height="1.4" fill="#6aa8c8"/><rect x="2.8" y="5" width="4.2" height="6" fill="#b89c2c"/><rect x="3.4" y="6.6" width="3" height="1.4" fill="#f4e8a8"/><path d="M8.6 5 V11.6 M10.4 5 V11.6" stroke="#ecd27a" stroke-width="0.6"/></svg>
<span style="left:121.90px;top:453.05px;font-size:11px;line-height:12.287px;color:#000;letter-spacing:-0.044px;-webkit-text-stroke:0.22px #000;">Ordinateurs</span>
<svg style="left:90.2px;top:473.3px" width="6" height="9" viewBox="0 0 6 9"><path d="M0.8 0.6 L4.6 4.3 L0.8 8" fill="none" stroke="#9a9a9a" stroke-width="1.4"/></svg>
<svg style="left:103.2px;top:468.9px" width="14" height="13" viewBox="0 0 14 13"><path d="M0.6 2.4 H5 L6.4 0.8 H12.6 V12.4 H0.6 Z" fill="#eccb62" stroke="#d0ac44" stroke-width="0.6"/><path d="M0.6 4 H12.6 V12.4 H0.6 Z" fill="#f5dc84"/><rect x="8.6" y="1.2" width="3" height="1.8" fill="#eef4fa"/><rect x="10.2" y="1.4" width="1.2" height="1.4" fill="#6aa8c8"/><rect x="2.8" y="5" width="4.2" height="6" fill="#b89c2c"/><rect x="3.4" y="6.6" width="3" height="1.4" fill="#f4e8a8"/><path d="M8.6 5 V11.6 M10.4 5 V11.6" stroke="#ecd27a" stroke-width="0.6"/></svg>
<span style="left:121.90px;top:469.55px;font-size:11px;line-height:12.287px;color:#000;letter-spacing:-0.092px;-webkit-text-stroke:0.22px #000;">Utilisateurs</span>
<svg style="left:72.2px;top:489.8px" width="6" height="9" viewBox="0 0 6 9"><path d="M0.8 0.6 L4.6 4.3 L0.8 8" fill="none" stroke="#9a9a9a" stroke-width="1.4"/></svg>
<svg style="left:85px;top:485.4px" width="16" height="15" viewBox="0 0 16 15"><path d="M0.6 2.2 H5.4 L6.6 3.6 H12.6 V12.6 H0.6 Z" fill="#f3d983" stroke="#d2b55a" stroke-width="0.6"/><path d="M0.6 4.6 H12.6 V12.6 H0.6 Z" fill="#f7e29c"/><g transform="translate(5.4,3.4) scale(0.72)"><path d="M3.2 2 Q3.2 0.8 4.4 0.8 H12.2 Q13.6 0.8 13.4 2.2 Q13.2 3.4 12 3.4 H11.6 V11.4 Q11.6 12.8 10.2 12.8 H2 Q0.6 12.8 0.8 11.6 Q1 10.4 2.4 10.4 H3.2 Z" fill="#f6eec8" stroke="#c4b67e" stroke-width="0.7"/><rect x="4.8" y="2.6" width="5.2" height="7" fill="#cfccc6"/><path d="M5.2 4 H9.6 M5.2 5.8 H9.6 M5.2 7.6 H9.6" stroke="#b4b1aa" stroke-width="0.7"/></g></svg>
<span style="left:104.50px;top:486.05px;font-size:11px;line-height:12.287px;color:#000;letter-spacing:-0.091px;-webkit-text-stroke:0.22px #000;">Objets de stratégie de groupe</span>
<svg style="left:72.2px;top:506.3px" width="6" height="9" viewBox="0 0 6 9"><path d="M0.8 0.6 L4.6 4.3 L0.8 8" fill="none" stroke="#9a9a9a" stroke-width="1.4"/></svg>
<svg style="left:85px;top:501.9px" width="16" height="15" viewBox="0 0 16 15"><path d="M0.6 2.2 H5.4 L6.6 3.6 H12.6 V12.6 H0.6 Z" fill="#f3d983" stroke="#d2b55a" stroke-width="0.6"/><path d="M0.6 4.6 H12.6 V12.6 H0.6 Z" fill="#f7e29c"/><rect x="7.6" y="2.4" width="5.4" height="3.4" fill="#f4f4f4" stroke="#aaa" stroke-width="0.5"/><path d="M6.4 7 H14.6 L11.6 10.4 V13.8 L9.4 12.6 V10.4 Z" fill="#7d8ea2" stroke="#5a6a7c" stroke-width="0.5"/></svg>
<span style="left:104.50px;top:502.55px;font-size:11px;line-height:12.287px;color:#000;letter-spacing:-0.128px;-webkit-text-stroke:0.22px #000;">Filtres WMI</span>
<svg style="left:72.2px;top:522.8px" width="6" height="9" viewBox="0 0 6 9"><path d="M0.8 0.6 L4.6 4.3 L0.8 8" fill="none" stroke="#9a9a9a" stroke-width="1.4"/></svg>
<svg style="left:85px;top:518.4px" width="16" height="15" viewBox="0 0 16 15"><path d="M0.6 2.2 H5.4 L6.6 3.6 H12.6 V12.6 H0.6 Z" fill="#f3d983" stroke="#d2b55a" stroke-width="0.6"/><path d="M0.6 4.6 H12.6 V12.6 H0.6 Z" fill="#f7e29c"/><rect x="5.4" y="3.6" width="9.4" height="10.6" fill="#f2f2f2" stroke="#70706c" stroke-width="0.9"/><rect x="5.4" y="3.6" width="9.4" height="2" fill="#8a7a6a"/><rect x="7.2" y="7" width="6" height="6.2" fill="#5a8fd8"/></svg>
<span style="left:104.50px;top:519.04px;font-size:11px;line-height:12.287px;color:#000;letter-spacing:-0.282px;-webkit-text-stroke:0.22px #000;">Objets GPO Starter</span>
<svg style="left:37.0px;top:539.3px" width="6" height="9" viewBox="0 0 6 9"><path d="M0.8 0.6 L4.6 4.3 L0.8 8" fill="none" stroke="#9a9a9a" stroke-width="1.4"/></svg>
<svg style="left:49.8px;top:534.9px" width="16" height="15" viewBox="0 0 16 15"><path d="M0.6 2.2 H5.4 L6.6 3.6 H12.6 V12.6 H0.6 Z" fill="#f3d983" stroke="#d2b55a" stroke-width="0.6"/><path d="M0.6 4.6 H12.6 V12.6 H0.6 Z" fill="#f7e29c"/><rect x="6.6" y="4.6" width="8.6" height="9.8" fill="#2f86e0"/><g fill="#d8ecff"><rect x="8" y="6" width="2" height="2"/><rect x="11.6" y="6" width="2" height="2"/><rect x="8" y="9.4" width="2" height="2"/><rect x="11.6" y="9.4" width="2" height="2"/></g><rect x="10" y="12" width="1.8" height="2.4" fill="#fff"/></svg>
<span style="left:69.30px;top:535.54px;font-size:11px;line-height:12.287px;color:#000;letter-spacing:-0.494px;-webkit-text-stroke:0.22px #000;">Sites</span>
<svg style="left:49.8px;top:551.4px" width="16" height="15" viewBox="0 0 16 15"><path d="M1.6 1.4 H6 L7 2.6 H11 V8 H1.6 Z" fill="#f1d980"/><rect x="5.4" y="3" width="8" height="9.6" fill="#3850b8"/><path d="M7.4 5 H10.6 M7.4 7.4 H11.2 M7.4 9.8 H10" stroke="#dfe6ff" stroke-width="1.1"/><rect x="1" y="7.4" width="4" height="6.4" fill="#9aa4aa" stroke="#5c686c" stroke-width="0.5"/><rect x="1.8" y="11" width="1.8" height="1.6" fill="#38c040"/><path d="M12 1.6 L15.4 1 L14 5" fill="#cfd4da" stroke="#8a9098" stroke-width="0.5"/></svg>
<span style="left:69.40px;top:552.04px;font-size:11px;line-height:12.287px;color:#000;letter-spacing:0.011px;-webkit-text-stroke:0.22px #000;">Modélisation de stratégie de groupe</span>
<svg style="left:49.8px;top:567.9px" width="16" height="15" viewBox="0 0 16 15"><path d="M0.6 2.2 H5.4 L6.6 3.6 H12.6 V12.6 H0.6 Z" fill="#f3d983" stroke="#d2b55a" stroke-width="0.6"/><path d="M0.6 4.6 H12.6 V12.6 H0.6 Z" fill="#f7e29c"/><rect x="6.6" y="5.4" width="8.4" height="9" fill="#fafafa" stroke="#a8aeb4" stroke-width="0.7"/><path d="M8.4 9.6 L10.2 11.6 L13.4 7.4" fill="none" stroke="#3a78d0" stroke-width="1.3"/></svg>
<span style="left:69.40px;top:568.54px;font-size:11px;line-height:12.287px;color:#000;letter-spacing:-0.131px;-webkit-text-stroke:0.22px #000;">Résultats de stratégie de groupe</span>
<div style="left:312.6px;top:267px;width:589.4px;height:389.5px;background:#f0f0f0;border-left:1.3px solid #808080;border-bottom:1px solid #c4c4c4;"></div>
<div style="left:313.3px;top:267px;width:587.2px;height:2px;background:#8a8a8a;"></div>
<div style="left:600px;top:290.8px;width:78.6px;height:18.5px;background:#f3f3f3;border:1px solid #d9d9d9;border-bottom:none;"></div>
<span style="left:663.90px;top:294.25px;font-size:11px;line-height:12.287px;color:#000;letter-spacing:-0.925px;-webkit-text-stroke:0.22px #000;">on</span>
<div style="left:315.6px;top:308.4px;width:580.6px;height:343px;background:#fff;border:1px solid #dcdcdc;"></div>
<div style="left:352.2px;top:314.7px;width:537px;height:329px;background:#fff;border:1px solid #a6a6a6;"></div>
<div style="left:666px;top:315.5px;width:1px;height:22px;background:#ececec;"></div>
<div style="left:728.5px;top:315.5px;width:1px;height:22px;background:#ececec;"></div>
<div style="left:805px;top:315.5px;width:1px;height:22px;background:#ececec;"></div>
<div style="left:869.6px;top:315.5px;width:1px;height:22px;background:#ececec;"></div>
<span style="left:672.00px;top:320.85px;font-size:11px;line-height:12.287px;color:#000;letter-spacing:-0.729px;-webkit-text-stroke:0.22px #000;">Appliqué</span>
<span style="left:734.80px;top:320.85px;font-size:11px;line-height:12.287px;color:#000;letter-spacing:-0.536px;-webkit-text-stroke:0.22px #000;">Lien activé</span>
<span style="left:811.30px;top:320.85px;font-size:11px;line-height:12.287px;color:#000;letter-spacing:-0.760px;-webkit-text-stroke:0.22px #000;">État GPO</span>
<span style="left:876.00px;top:320.85px;font-size:11px;line-height:12.287px;color:#000;letter-spacing:-0.468px;-webkit-text-stroke:0.22px #000;">Filt</span>
<div style="left:353.2px;top:627.2px;width:535px;height:15.4px;background:#f0f0f0;"></div>
<div style="left:369px;top:627.7px;width:371px;height:13.8px;background:#cacaca;"></div>
<svg style="left:357.8px;top:630.4px" width="6" height="9" viewBox="0 0 6 9"><path d="M5 0.8 L1.4 4.3 L5 7.8" fill="none" stroke="#484848" stroke-width="1.8"/></svg>
<svg style="left:877.5px;top:630.4px" width="6" height="9" viewBox="0 0 6 9"><path d="M1 0.8 L4.6 4.3 L1 7.8" fill="none" stroke="#484848" stroke-width="1.8"/></svg>
<div style="left:10px;top:657.2px;width:892.6px;height:21.5px;background:#f0f0f0;border-left:1px solid #adadad;border-top:1px solid #d0d0d0;"></div>
<div style="left:699.3px;top:659px;width:1px;height:18px;background:#d7d7d7;"></div>
<div style="left:821.3px;top:659px;width:1px;height:18px;background:#d7d7d7;"></div>
<div style="left:250.2px;top:245.0px;width:414px;height:378.1px;background:#f0f0f0;border:1px solid #6a6a6a;border-top-color:#9a9a9a;border-bottom-color:#8c8c8c;border-right-color:#7c7c7c;box-shadow:0 0 3px rgba(0,0,0,0.10);"></div>
<div style="left:251.2px;top:246.0px;width:412px;height:27.2px;background:#fff;"></div>
<span style="left:259.00px;top:253.04px;font-size:11px;line-height:12.287px;color:#000;letter-spacing:-0.154px;-webkit-text-stroke:0.22px #000;">Sélectionner un objet GPO</span>
<svg style="left:643.5px;top:253.8px" width="11" height="10" viewBox="0 0 11 10"><path d="M0.8 0.6 L10 9 M10 0.6 L0.8 9" stroke="#222" stroke-width="1.1" fill="none"/></svg>
<span style="left:260.80px;top:284.37px;font-size:10.2px;line-height:11.393px;color:#000;letter-spacing:-0.212px;-webkit-text-stroke:0.22px #000;">Rechercher dans ce domaine :</span>
<div style="left:286.2px;top:304.1px;width:367.3px;height:20px;background:#e1e1e1;border:1px solid #b2b2b2;"></div>
<span style="left:289.00px;top:308.57px;font-size:10.2px;line-height:11.393px;color:#000;letter-spacing:-0.214px;-webkit-text-stroke:0.22px #000;">EPITAF.local</span>
<svg style="left:641.2px;top:312.4px" width="9" height="6" viewBox="0 0 9 6"><path d="M0.6 0.7 L4.2 4.5 L7.8 0.7" fill="none" stroke="#5a5a5a" stroke-width="1.2"/></svg>
<span style="left:260.80px;top:336.37px;font-size:10.2px;line-height:11.393px;color:#000;letter-spacing:-0.022px;-webkit-text-stroke:0.22px #000;">Objets de stratégie de groupe :</span>
<div style="left:286.4px;top:359.5px;width:367px;height:179px;background:#fff;border:1px solid #828790;"></div>
<div style="left:593.5px;top:360.5px;width:1px;height:23px;background:#e5e5e5;"></div>
<svg style="left:437.8px;top:361.6px" width="8" height="5" viewBox="0 0 8 5"><path d="M0.6 4.2 L3.8 0.8 L7 4.2" fill="none" stroke="#8a8a8a" stroke-width="0.9"/></svg>
<span style="left:293.00px;top:366.67px;font-size:10.2px;line-height:11.393px;color:#000;letter-spacing:-0.839px;-webkit-text-stroke:0.22px #000;">Nom</span>
<span style="left:293.00px;top:386.47px;font-size:10.2px;line-height:11.393px;color:#000;letter-spacing:-0.539px;-webkit-text-stroke:0.22px #000;">Admins - GPO</span>
<span style="left:293.00px;top:401.67px;font-size:10.2px;line-height:11.393px;color:#000;letter-spacing:-0.231px;-webkit-text-stroke:0.22px #000;">Default Domain Controllers Policy</span>
<span style="left:293.00px;top:417.47px;font-size:10.2px;line-height:11.393px;color:#000;letter-spacing:-0.296px;-webkit-text-stroke:0.22px #000;">Default Domain Policy</span>
<div style="left:292.5px;top:430.4px;width:300px;height:16px;background:#0078d7;"></div>
<span style="left:293.00px;top:432.77px;font-size:10.2px;line-height:11.393px;color:#fff;letter-spacing:-0.385px;-webkit-text-stroke:0.2px #fff;">Firewall - GPO</span>
<div style="left:503.7px;top:588.8px;width:65.5px;height:19.2px;background:#e1e1e1;border:1.5px solid #1a82d8;"></div>
<span style="left:528.17px;top:593.17px;font-size:10.2px;line-height:11.393px;color:#000;letter-spacing:-1.067px;-webkit-text-stroke:0.22px #000;">OK</span>
<div style="left:582.2px;top:588.8px;width:67.8px;height:19.7px;background:#e1e1e1;border:1px solid #adadad;"></div>
<span style="left:599.00px;top:593.17px;font-size:10.2px;line-height:11.393px;color:#000;letter-spacing:-0.304px;-webkit-text-stroke:0.22px #000;">Annuler</span>
<div style="left:289.2px;top:426.2px;width:306.8px;height:26.4px;background:transparent;border:3.5px solid #f50012;border-radius:2.5px;"></div>
<div style="left:500.3px;top:585.4px;width:72.6px;height:26.4px;background:transparent;border:3.5px solid #f50012;border-radius:2.5px;"></div>
<span style="left:270.60px;top:430.28px;font-size:24px;line-height:26.808px;color:#f50012;-webkit-text-stroke:2.1px #f50012;clip-path:polygon(0 0,9.4px 0,9.4px 100%,4.8px 100%,4.8px 60%,0 60%);">1</span>
<span style="left:471.90px;top:587.88px;font-size:24px;line-height:26.808px;color:#f50012;font-weight:700;transform:scaleX(0.9);transform-origin:0 0;-webkit-text-stroke:1.4px #f50012;">2</span>
<div style="left:3px;top:711.6px;width:946px;height:40px;background:#0c1119;"></div>
<div style="left:409.5px;top:711.6px;width:41.3px;height:36px;background:#2e3238;"></div>
<div style="left:409.5px;top:746px;width:41.3px;height:1px;background:#5a6270;"></div>
<div style="left:451.8px;top:711.6px;width:1px;height:36px;background:#3a3e46;"></div>
<div style="left:458px;top:746px;width:36.5px;height:1px;background:#3a3e46;"></div>
<div style="left:503px;top:746px;width:37px;height:1px;background:#3a3e46;"></div>
<div style="left:187px;top:746px;width:37px;height:1px;background:#30343c;"></div>
<div style="left:232.5px;top:746px;width:35.5px;height:1px;background:#30343c;"></div>
<div style="left:277px;top:746px;width:37px;height:1px;background:#30343c;"></div>
<div style="left:368px;top:746px;width:37px;height:1px;background:#30343c;"></div>
<svg style="left:18px;top:722.8px" width="15.2" height="15" viewBox="0 0 15.2 15"><g fill="#fff"><path d="M0 2.1 L6.2 1.2 V7.1 H0 Z"/><path d="M7 1.1 L15.2 0 V7.1 H7 Z"/><path d="M0 7.9 H6.2 V13.8 L0 12.9 Z"/><path d="M7 7.9 H15.2 V15 L7 13.9 Z"/></g></svg>
<svg style="left:61px;top:722px" width="17" height="17" viewBox="0 0 17 17"><circle cx="10.6" cy="6.5" r="4.6" fill="none" stroke="#e8e8e8" stroke-width="1.5"/><path d="M7.4 10 L1.4 15.8" stroke="#e8e8e8" stroke-width="1.6"/></svg>
<svg style="left:105.5px;top:723px" width="16" height="15" viewBox="0 0 16 15"><g fill="none" stroke="#e8e8e8" stroke-width="1.3"><rect x="1.6" y="3" width="8.6" height="8.6"/><path d="M0.6 0.8 H2.8 M8.8 0.8 H11.2 M0.6 13.9 H2.8 M8.8 13.9 H11.2"/><path d="M13.6 0.4 V14.4"/></g><rect x="12.4" y="5.2" width="2.6" height="3" fill="#e8e8e8"/></svg>
<svg style="left:149px;top:719px" width="23" height="22" viewBox="0 0 23 22"><path d="M11.6 4.4 C6.6 4.4 3.6 8 3.6 12 C3.6 16.6 7 19.8 11.8 19.8 C15.4 19.8 18 17.8 19 15 H14.4 C13.8 16 13 16.4 11.8 16.4 C9.8 16.4 8.4 15 8.2 13.2 H19.6 C20 8.2 16.8 4.4 11.6 4.4 Z M8.3 10.4 C8.6 8.8 9.8 7.6 11.6 7.6 C13.4 7.6 14.6 8.8 14.8 10.4 Z" fill="#3bb4f4"/><path d="M2.4 20.4 C-0.6 16.6 3.4 8.6 11 4 C15.4 1.4 19.6 0.6 21.4 2.2 C22.4 3.2 22.2 5.2 21 7.4 C21.4 5.4 21 4 19.8 3.4 C17.6 2.6 13.6 4.4 9.6 7.8 C4.6 12 1.8 17.4 3.8 19.6 C4.6 20.4 6 20.4 7.6 19.8 C5.4 21.4 3.4 21.6 2.4 20.4 Z" fill="#f4c430"/></svg>
<svg style="left:195px;top:722px" width="21" height="17" viewBox="0 0 21 17"><path d="M0.6 1.2 Q0.6 0.4 1.4 0.4 H6.6 L8.4 2.2 H19.4 Q20.2 2.2 20.2 3 V15.6 Q20.2 16.4 19.4 16.4 H1.4 Q0.6 16.4 0.6 15.6 Z" fill="#f5c84c"/><path d="M0.6 4.4 H20.2 V15.6 Q20.2 16.4 19.4 16.4 H1.4 Q0.6 16.4 0.6 15.6 Z" fill="#fbe08a"/><path d="M5 16.4 V10.6 Q5 9.8 5.8 9.8 H15 Q15.8 9.8 15.8 10.6 V16.4 H13 V12.6 H7.8 V16.4 Z" fill="#3a9cf0"/></svg>
<svg style="left:239.5px;top:719.5px" width="23" height="22" viewBox="0 0 23 22"><rect x="0.6" y="0.4" width="10.6" height="19.6" fill="#2f8ae8"/><rect x="2" y="2.4" width="7.8" height="1.4" fill="#8cc4ff"/><rect x="2" y="5.4" width="7.8" height="1.4" fill="#6db2fb"/><rect x="4.4" y="12.4" width="18" height="9.2" rx="1.2" fill="#7f94ac" stroke="#c8d4e2" stroke-width="0.8"/><path d="M10.4 12.4 V10.4 H16.4 V12.4" fill="none" stroke="#c8d4e2" stroke-width="1.2"/><rect x="4.8" y="15.6" width="17.2" height="1.4" fill="#c8d4e2"/></svg>
<svg style="left:285px;top:721.5px" width="21" height="17.5" viewBox="0 0 21 17.5"><rect x="0.5" y="0.5" width="20" height="16.5" fill="#0a0a0a" stroke="#8a8a8a" stroke-width="1"/><rect x="1" y="1" width="19" height="2.4" fill="#5a5a5a"/><path d="M3 5.6 L5.6 7.2 L3 8.8 M7 9.4 H12" fill="none" stroke="#d8d8d8" stroke-width="1"/></svg>
<svg style="left:332px;top:721.6px" width="18" height="18" viewBox="-9 -9 18 18"><g fill="#f2f2f2"><rect x="-2" y="-8.8" width="4" height="4.4" rx="0.6" transform="rotate(0)"/><rect x="-2" y="-8.8" width="4" height="4.4" rx="0.6" transform="rotate(45)"/><rect x="-2" y="-8.8" width="4" height="4.4" rx="0.6" transform="rotate(90)"/><rect x="-2" y="-8.8" width="4" height="4.4" rx="0.6" transform="rotate(135)"/><rect x="-2" y="-8.8" width="4" height="4.4" rx="0.6" transform="rotate(180)"/><rect x="-2" y="-8.8" width="4" height="4.4" rx="0.6" transform="rotate(225)"/><rect x="-2" y="-8.8" width="4" height="4.4" rx="0.6" transform="rotate(270)"/><rect x="-2" y="-8.8" width="4" height="4.4" rx="0.6" transform="rotate(315)"/></g><circle r="6.2" fill="#f2f2f2"/><circle r="3.5" fill="#0c1119"/></svg>
<svg style="left:376.3px;top:723.4px" width="19.6" height="14" viewBox="0 0 19.6 14"><rect width="19.6" height="14" fill="#3a9ee8"/><circle cx="5.6" cy="5.6" r="3.4" fill="#f4c430"/><path d="M5.6 5.6 V2.2 A3.4 3.4 0 0 1 9 5.6 Z" fill="#e8f4ff"/><rect x="11.6" y="2" width="2" height="8" fill="#bfe0ff"/><rect x="15" y="3.4" width="2" height="6.6" fill="#e8f4ff"/><rect x="2.4" y="11" width="8" height="1.4" fill="#f4c430"/></svg>
<svg style="left:422px;top:719px" width="22" height="23" viewBox="0 0 22 23"><path d="M4.6 2.6 Q4.6 0.8 6.4 0.8 H18.6 Q20.8 0.8 20.4 3 Q20 4.8 18.2 4.8 H17.6 V19 Q17.6 21.4 15.4 21.4 H2.6 Q0.4 21.4 0.8 19.4 Q1.2 17.6 3.2 17.6 H4.6 Z" fill="#f8f1cc" stroke="#d8cc94" stroke-width="0.7"/><rect x="6.6" y="3.6" width="9" height="13" fill="#e6e4de"/><path d="M7.4 6 H14.8 M7.4 8.6 H14.8 M7.4 11.2 H14.8 M7.4 13.8 H14.8" stroke="#c9c6bd" stroke-width="1"/><rect x="7" y="12.4" width="14.4" height="9.6" rx="1.2" fill="#66788c"/><path d="M11.4 12.4 V10.2 H17 V12.4" fill="none" stroke="#4a5868" stroke-width="1.4"/><rect x="7" y="15.6" width="14.4" height="1.6" fill="#b4c0cc"/></svg>
<svg style="left:466.5px;top:719px" width="22" height="23" viewBox="0 0 22 23"><path d="M4.6 2.6 Q4.6 0.8 6.4 0.8 H18.6 Q20.8 0.8 20.4 3 Q20 4.8 18.2 4.8 H17.6 V19 Q17.6 21.4 15.4 21.4 H2.6 Q0.4 21.4 0.8 19.4 Q1.2 17.6 3.2 17.6 H4.6 Z" fill="#f8f1cc" stroke="#d8cc94" stroke-width="0.7"/><rect x="6.6" y="3.6" width="9" height="13" fill="#e6e4de"/><path d="M7.4 6 H14.8 M7.4 8.6 H14.8 M7.4 11.2 H14.8 M7.4 13.8 H14.8" stroke="#c9c6bd" stroke-width="1"/></svg>
<svg style="left:510px;top:722px" width="23" height="15" viewBox="0 0 23 15"><path d="M0.6 6.4 L12.4 0.8 L22.4 4 L22.4 8.2 L10.6 14.4 L0.6 10.6 Z" fill="#e8dc7a"/><path d="M0.6 6.4 L12.4 0.8 L22.4 4 L10.6 10 Z" fill="#f6eea6"/><path d="M5.4 5.6 L13 2 L18 3.6 L10.4 7.4 Z" fill="#d0b020"/><path d="M0.6 6.4 L10.6 10 V14.4 L0.6 10.6 Z" fill="#d8cc70"/></svg>
<svg style="left:772px;top:725.5px" width="12" height="8" viewBox="0 0 12 8"><path d="M0.8 6.8 L6 1.4 L11.2 6.8" fill="none" stroke="#f0f0f0" stroke-width="1.3"/></svg>
<svg style="left:792px;top:724.5px" width="17" height="14" viewBox="0 0 17 14"><g fill="none" stroke="#f0f0f0" stroke-width="1.1"><rect x="4.4" y="1" width="11.4" height="7.6"/><path d="M10 8.6 V11.6 M6.4 11.8 H13.6"/><path d="M0.8 0.6 V9.6 H4" /><path d="M0.8 2.6 H3.4"/></g></svg>
<svg style="left:814px;top:723.5px" width="17" height="15" viewBox="0 0 17 15"><path d="M1 5.4 H3.4 L7 2 V12.6 L3.4 9.4 H1 Z" fill="none" stroke="#f0f0f0" stroke-width="1.1"/><circle cx="11.8" cy="10.4" r="4.2" fill="#e81123"/><path d="M10.2 8.8 L13.4 12 M13.4 8.8 L10.2 12" stroke="#fff" stroke-width="1.2"/></svg>
<span style="left:852.56px;top:715.50px;font-size:11.6px;line-height:12.957px;color:#fff;letter-spacing:-0.883px;-webkit-text-stroke:0.2px #fff;">10:18</span>
<span style="left:837.80px;top:732.30px;font-size:11.6px;line-height:12.957px;color:#fff;letter-spacing:-0.403px;-webkit-text-stroke:0.2px #fff;">23/02/2022</span>
<svg style="left:908.4px;top:723px" width="16.5" height="16" viewBox="0 0 16.5 16"><path d="M0.8 0.8 H15.2 V12 H10.8 L8 14.8 L5.2 12 H0.8 Z" fill="none" stroke="#e4e4e4" stroke-width="1.3"/></svg>
<svg style="left:924px;top:727px" width="21" height="20" viewBox="0 0 21 20"><rect x="14.499999999999998" y="1.5" width="3.8" height="3.8" rx="0.8" fill="#d9d2bc"/><rect x="15.999999999999998" y="3.1999999999999997" width="2.4" height="2.2" rx="0.6" fill="#fbfbf8"/><rect x="8.299999999999999" y="7.1" width="3.8" height="3.8" rx="0.8" fill="#d9d2bc"/><rect x="9.799999999999999" y="8.8" width="2.4" height="2.2" rx="0.6" fill="#fbfbf8"/><rect x="14.499999999999998" y="7.5" width="3.8" height="3.8" rx="0.8" fill="#d9d2bc"/><rect x="15.999999999999998" y="9.200000000000001" width="2.4" height="2.2" rx="0.6" fill="#fbfbf8"/><rect x="2.1" y="13.5" width="3.8" height="3.8" rx="0.8" fill="#d9d2bc"/><rect x="3.6" y="15.200000000000001" width="2.4" height="2.2" rx="0.6" fill="#fbfbf8"/><rect x="8.299999999999999" y="13.5" width="3.8" height="3.8" rx="0.8" fill="#d9d2bc"/><rect x="9.799999999999999" y="15.200000000000001" width="2.4" height="2.2" rx="0.6" fill="#fbfbf8"/><rect x="14.499999999999998" y="13.5" width="3.8" height="3.8" rx="0.8" fill="#d9d2bc"/><rect x="15.999999999999998" y="15.200000000000001" width="2.4" height="2.2" rx="0.6" fill="#fbfbf8"/></svg>
<div style="left:942px;top:712px;width:1.2px;height:35px;background:#a8a8a8;"></div>
</div></div></body></html>
